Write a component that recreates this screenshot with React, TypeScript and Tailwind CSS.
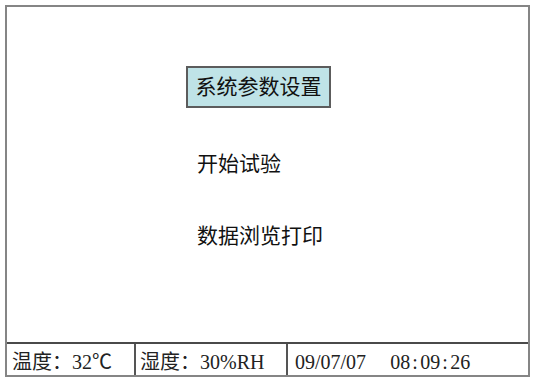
import React from 'react';

const cjk = "font-['Liberation_Serif','Noto_Sans_CJK_SC',serif]";

// 宋体风格的半角冒号较宽
const Colon = () => <span className="inline-block w-[10px] text-center">:</span>;

export default function App() {
  const menu = ['系统参数设置', '开始试验', '数据浏览打印'];

  return (
    <div className="w-[536px] h-[382px] bg-white pt-[5px] pl-[5px]">
      <div className="w-[525px] h-[372px] border-2 border-[#858585] flex flex-col">
        {/* 菜单 */}
        <div className={`h-[335px] flex flex-col items-start pl-[179px] pt-[59px] text-[21px] text-[#111] whitespace-nowrap ${cjk}`}>
          <div className="h-[42px] w-[145px] flex items-center justify-center bg-[#bfe3e7] border-2 border-[#5c5c5c] leading-none">
            {menu[0]}
          </div>
          <div className="h-[42px] mt-[35px] flex items-center px-[11px] leading-none">{menu[1]}</div>
          <div className="h-[42px] mt-[30px] flex items-center px-[11px] leading-none">{menu[2]}</div>
        </div>

        {/* 状态栏 */}
        <div className={`h-[33px] border-t-2 border-[#4a4a4a] flex text-[20px] text-[#222] leading-none whitespace-nowrap ${cjk}`}>
          <div className="w-[129px] border-r-2 border-[#555] flex items-center pl-[5px] pt-[5px]">
            温度：32℃
          </div>
          <div className="w-[152px] border-r-2 border-[#555] flex items-center pl-[4px] pt-[5px]">
            湿度：30%RH
          </div>
          <div className="flex-1 flex items-center pl-[7px] pt-[5px]">
            <span>09/07/07</span>
            <span className="ml-[24px]">
              08<Colon />09<Colon />26
            </span>
          </div>
        </div>
      </div>
    </div>
  );
}
